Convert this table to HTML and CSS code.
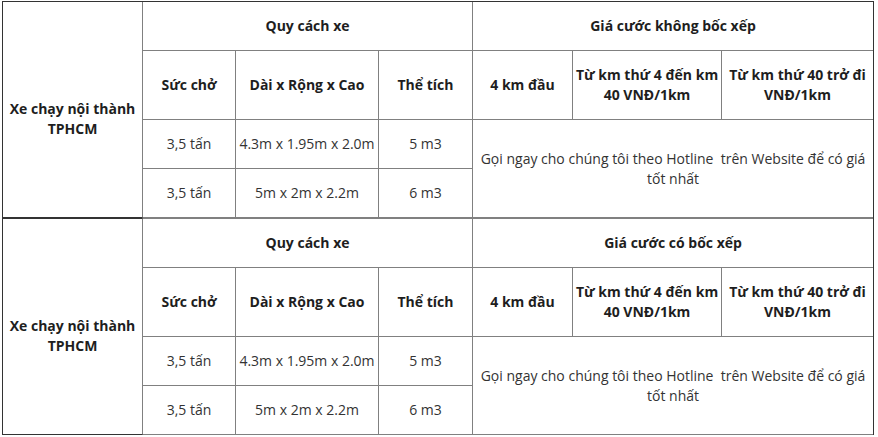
FILE: index.html
```html
<!DOCTYPE html>
<html lang="vi">
<head>
<meta charset="utf-8">
<title>Bảng giá</title>
<link rel="stylesheet" href="styles.css">
</head>
<body>
<div class="wrap">
  <table class="price first">
    <colgroup>
      <col class="c0"><col class="c1"><col class="c2"><col class="c3"><col class="c4"><col class="c5"><col class="c6">
    </colgroup>
    <tr>
      <td rowspan="4" class="lead">Xe chạy nội thành<br>TPHCM</td>
      <td colspan="3" class="head">Quy cách xe</td>
      <td colspan="3" class="head end">Giá cước không bốc xếp</td>
    </tr>
    <tr>
      <td class="head">Sức chở</td>
      <td class="head">Dài x Rộng x Cao</td>
      <td class="head">Thể tích</td>
      <td class="head">4 km đầu</td>
      <td class="head">Từ km thứ 4 đến km<br>40 VNĐ/1km</td>
      <td class="head end">Từ km thứ 40 trở đi<br>VNĐ/1km</td>
    </tr>
    <tr>
      <td>3,5 tấn</td>
      <td>4.3m x 1.95m x 2.0m</td>
      <td>5 m3</td>
      <td colspan="3" rowspan="2" class="end">Gọi ngay cho chúng tôi theo Hotline&nbsp; trên Website để có giá<br>tốt nhất</td>
    </tr>
    <tr>
      <td>3,5 tấn</td>
      <td>5m x 2m x 2.2m</td>
      <td>6 m3</td>
    </tr>
  </table>
  <table class="price second">
    <colgroup>
      <col class="c0"><col class="c1"><col class="c2"><col class="c3"><col class="c4"><col class="c5"><col class="c6">
    </colgroup>
    <tr class="toprow">
      <td rowspan="4" class="lead">Xe chạy nội thành<br>TPHCM</td>
      <td colspan="3" class="head">Quy cách xe</td>
      <td colspan="3" class="head end">Giá cước có bốc xếp</td>
    </tr>
    <tr>
      <td class="head">Sức chở</td>
      <td class="head">Dài x Rộng x Cao</td>
      <td class="head">Thể tích</td>
      <td class="head">4 km đầu</td>
      <td class="head">Từ km thứ 4 đến km<br>40 VNĐ/1km</td>
      <td class="head end">Từ km thứ 40 trở đi<br>VNĐ/1km</td>
    </tr>
    <tr>
      <td>3,5 tấn</td>
      <td>4.3m x 1.95m x 2.0m</td>
      <td>5 m3</td>
      <td colspan="3" rowspan="2" class="end">Gọi ngay cho chúng tôi theo Hotline&nbsp; trên Website để có giá<br>tốt nhất</td>
    </tr>
    <tr>
      <td>3,5 tấn</td>
      <td>5m x 2m x 2.2m</td>
      <td>6 m3</td>
    </tr>
  </table>
</div>
</body>
</html>
```
FILE: styles.css
```css
html, body {
  background: #ffffff;
}
body {
  margin: 1px 0 0 2px;
  font-family: "Open Sans", "Liberation Sans", sans-serif;
  font-size: 14px;
  line-height: 20px;
  color: #333333;
}
.wrap {
  width: 872px;
}
.price {
  width: 872px;
  table-layout: fixed;
  border-collapse: separate;
  border-spacing: 0;
  border-left: 1px solid #333333;
  border-right: 1px solid #333333;
}
.price.first {
  border-top: 1px solid #333333;
}
.c0 { width: 140px; }
.c1 { width: 93px; }
.c2 { width: 143px; }
.c3 { width: 94px; }
.c4 { width: 100px; }
.c5 { width: 149px; }
.c6 { width: 151px; }
.price td {
  padding: 14px 0;
  text-align: center;
  vertical-align: middle;
  border-right: 1px solid #808080;
  border-bottom: 1px solid #808080;
  white-space: nowrap;
  overflow: hidden;
}
.price td.end {
  border-right: none;
}
.price td.head {
  font-weight: 700;
  color: #1e1e1e;
}
.price td.lead {
  font-weight: 700;
  color: #1e1e1e;
  padding: 32px 0 14px;
  border-bottom: 1px solid #333333;
}
.second .toprow td {
  border-top: 1px solid #808080;
}
.second .toprow td.lead {
  border-top: 1px solid #333333;
}
```
